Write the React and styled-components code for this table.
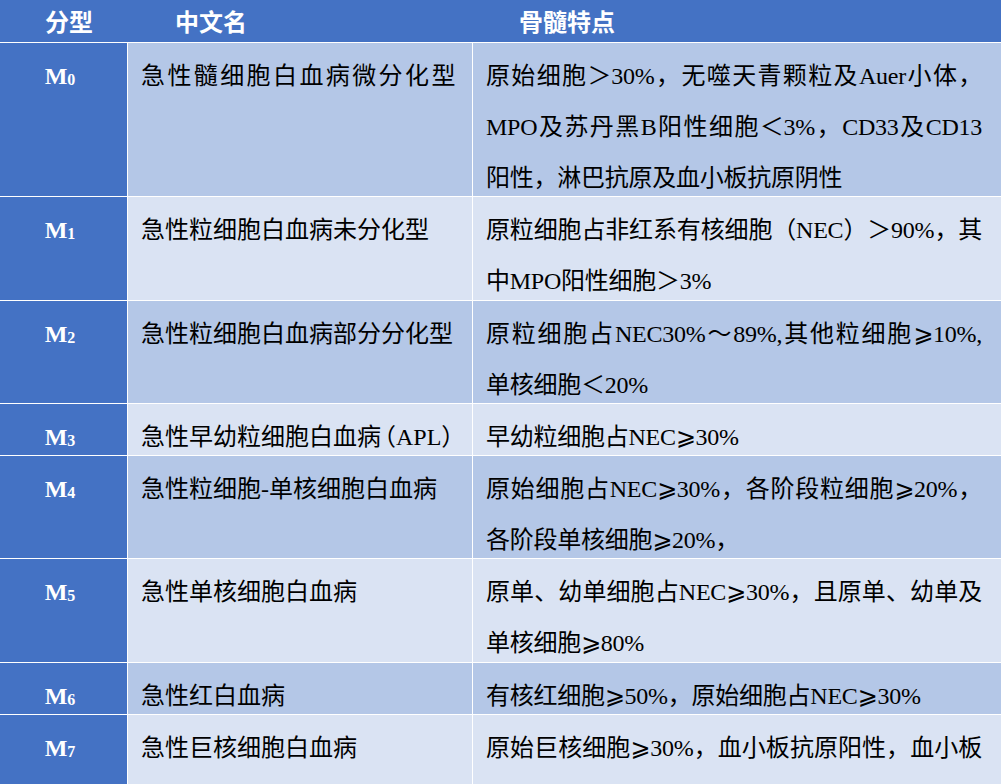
import React from "react";
import styled, { createGlobalStyle } from "styled-components";

const BLUE = "#4472C4";
const ODD = "#B4C7E7";
const EVEN = "#DAE3F3";

const Global = createGlobalStyle`
  html, body { margin: 0; padding: 0; overflow: hidden; background: #fff; }
  body { width: 1001px; height: 784px; }
`;

const Table = styled.div`
  width: 1001px;
  display: flex;
  flex-direction: column;
  gap: 1px;
  background: #fff;
`;

const Header = styled.div`
  display: grid;
  grid-template-columns: 128px 345px 1fr;
  height: 42px;
  background: ${BLUE};
`;

const HeadCell = styled.div`
  padding-left: ${(p) => p.$indent}px;
  font-family: "Noto Sans CJK SC", sans-serif;
  font-weight: 700;
  font-size: 24px;
  line-height: 42px;
  color: #fff;
`;

const Row = styled.div`
  display: grid;
  grid-template-columns: 127px 344px 1fr;
  column-gap: 1px;
  min-height: ${(p) => p.$h}px;
`;

const Cell = styled.div`
  background: ${(p) => p.$bg};
  padding: ${(p) => p.$pad};
  font-family: "Liberation Serif", "Noto Sans CJK SC", "DejaVu Sans", serif;
  font-size: 24px;
  color: #000;
`;

const Lines = styled.div`
  padding-top: 8px;
  margin-bottom: -8px;
  line-height: 51px;
  letter-spacing: ${(p) => p.$spacing || 0}px;
`;

const TypeLabel = styled(Lines)`
  color: #fff;
  font-weight: 700;
  text-align: center;
  padding-right: 7px;
`;

const Sub = styled.span`
  font-size: 16px;
  line-height: 0;
  vertical-align: -1px;
`;

const Paren = styled.span`
  margin-left: ${(p) => (p.$open ? "-9px" : "0")};
  margin-right: ${(p) => (p.$open ? "0" : "-12px")};
`;

const Line = styled.span`
  display: block;
  height: 51px;
  text-align: justify;
  text-align-last: ${(p) => (p.$justify ? "justify" : "left")};
`;

const NameLine = styled.span`
  display: block;
  height: 51px;
  white-space: nowrap;
`;

const rows = [
  {
    n: "0",
    name: "急性髓细胞白血病微分化型",
    spacing: 2.4,
    h: 153,
    lines: [
      ["原始细胞＞30%，无噬天青颗粒及Auer小体，", true],
      ["MPO及苏丹黑B阳性细胞＜3%，CD33及CD13", true],
      ["阳性，淋巴抗原及血小板抗原阴性", false],
    ],
  },
  {
    n: "1",
    name: "急性粒细胞白血病未分化型",
    h: 103,
    lines: [
      ["原粒细胞占非红系有核细胞（NEC）＞90%，其", true],
      ["中MPO阳性细胞＞3%", false],
    ],
  },
  {
    n: "2",
    name: "急性粒细胞白血病部分分化型",
    h: 102,
    lines: [
      ["原粒细胞占NEC30%～89%,其他粒细胞⩾10%,", true],
      ["单核细胞＜20%", false],
    ],
  },
  {
    n: "3",
    name: (
      <>
        急性早幼粒细胞白血病<Paren $open>（</Paren>APL<Paren>）</Paren>
      </>
    ),
    h: 51,
    lines: [["早幼粒细胞占NEC⩾30%", false]],
  },
  {
    n: "4",
    name: "急性粒细胞-单核细胞白血病",
    h: 102,
    lines: [
      ["原始细胞占NEC⩾30%，各阶段粒细胞⩾20%，", true],
      ["各阶段单核细胞⩾20%，", false],
    ],
  },
  {
    n: "5",
    name: "急性单核细胞白血病",
    h: 103,
    lines: [
      ["原单、幼单细胞占NEC⩾30%，且原单、幼单及", true],
      ["单核细胞⩾80%", false],
    ],
  },
  {
    n: "6",
    name: "急性红白血病",
    h: 51,
    lines: [["有核红细胞⩾50%，原始细胞占NEC⩾30%", false]],
  },
  {
    n: "7",
    name: "急性巨核细胞白血病",
    h: 102,
    lines: [
      ["原始巨核细胞⩾30%，血小板抗原阳性，血小板", true],
      ["过氧化物酶阳性", false],
    ],
  },
];

export default function App() {
  return (
    <>
      <Global />
      <Table>
        <Header>
          <HeadCell $indent={45}>分型</HeadCell>
          <HeadCell $indent={47}>中文名</HeadCell>
          <HeadCell $indent={46}>骨髓特点</HeadCell>
        </Header>
        {rows.map((r, i) => {
          const bg = i % 2 === 0 ? ODD : EVEN;
          return (
            <Row key={r.n} $h={r.h}>
              <Cell $bg={BLUE} $pad="0">
                <TypeLabel>
                  M<Sub>{r.n}</Sub>
                </TypeLabel>
              </Cell>
              <Cell $bg={bg} $pad="0 8px 0 13px">
                <Lines $spacing={r.spacing}>
                  <NameLine>{r.name}</NameLine>
                </Lines>
              </Cell>
              <Cell $bg={bg} $pad="0 19px 0 13px">
                <Lines $spacing={-0.25}>
                  {r.lines.map(([t, j], k) => (
                    <Line key={k} $justify={j}>
                      {t}
                    </Line>
                  ))}
                </Lines>
              </Cell>
            </Row>
          );
        })}
      </Table>
    </>
  );
}
